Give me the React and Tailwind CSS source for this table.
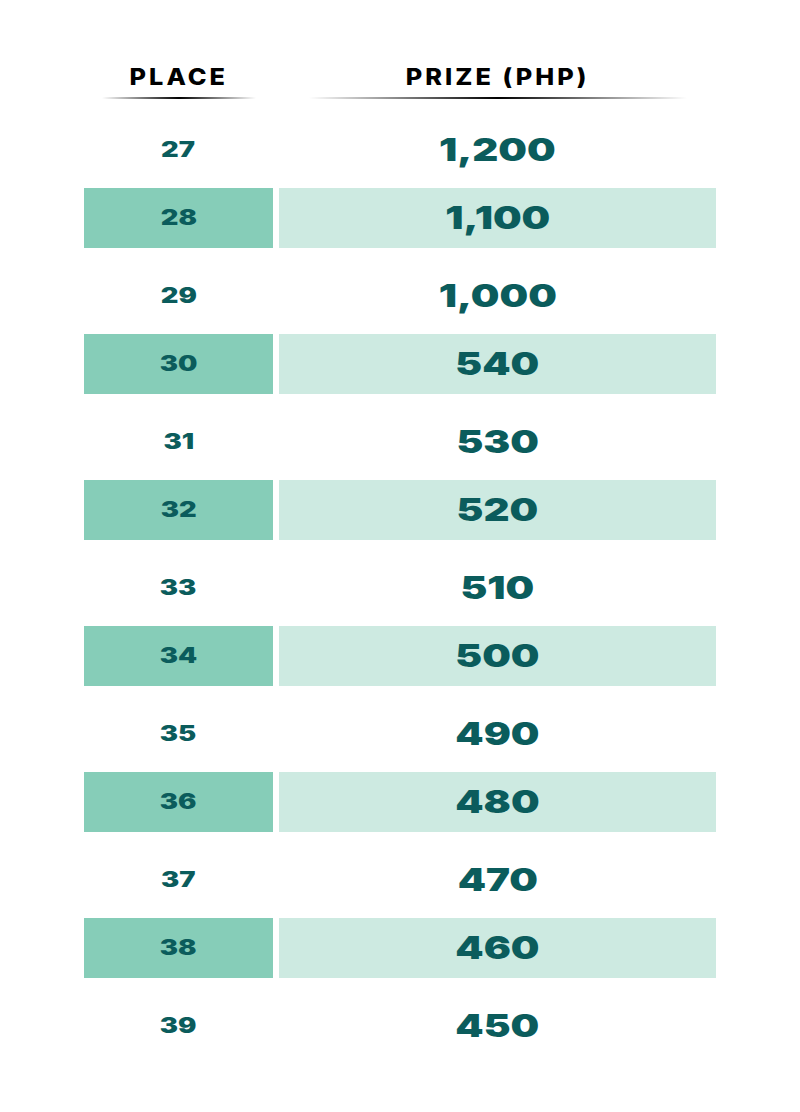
const rows = [
  ['27', '1,200'],
  ['28', '1,100'],
  ['29', '1,000'],
  ['30', '540'],
  ['31', '530'],
  ['32', '520'],
  ['33', '510'],
  ['34', '500'],
  ['35', '490'],
  ['36', '480'],
  ['37', '470'],
  ['38', '460'],
  ['39', '450'],
];

export default function App() {
  return (
    <div className="w-[800px] h-[1112px] bg-white font-['Inter',sans-serif] text-[#0b5c5c]">
      <div className="w-[632px] mx-auto pt-[62px]">
        {/* Header */}
        <div className="grid grid-cols-[189px_437px] gap-x-[6px] h-[40px]">
          <div className="flex flex-col items-center">
            <span className="text-[23px] leading-[30px] font-extrabold tracking-[0.12em] text-black inline-block scale-x-[1.1]">PLACE</span>
            <div className="mt-[5px] w-[154px] h-[2px] bg-[linear-gradient(90deg,rgba(0,0,0,0),#000_50%,rgba(0,0,0,0))]" />
          </div>
          <div className="flex flex-col items-center">
            <span className="text-[23px] leading-[30px] font-extrabold tracking-[0.12em] text-black inline-block scale-x-[1.1]">PRIZE (PHP)</span>
            <div className="mt-[5px] w-[378px] h-[2px] bg-[linear-gradient(90deg,rgba(0,0,0,0),#000_50%,rgba(0,0,0,0))]" />
          </div>
        </div>

        {/* Rows */}
        <div>
          {rows.map(([place, prize], i) => {
            const striped = i % 2 === 1;
            return striped ? (
              <div key={place} className="grid grid-cols-[189px_437px] gap-x-[6px] h-[60px]">
                <div className="bg-[#86cdb8] flex items-center justify-center">
                  <span className="text-[21px] font-black inline-block scale-x-[1.3]">{place}</span>
                </div>
                <div className="bg-[#cdeae1] flex items-center justify-center">
                  <span className="text-[32px] font-black inline-block scale-x-[1.26]">{prize}</span>
                </div>
              </div>
            ) : (
              <div key={place} className="grid grid-cols-[189px_437px] gap-x-[6px] h-[86px] pt-[10px]">
                <div className="flex items-center justify-center">
                  <span className="text-[21px] font-black inline-block scale-x-[1.3]">{place}</span>
                </div>
                <div className="flex items-center justify-center">
                  <span className="text-[32px] font-black inline-block scale-x-[1.26]">{prize}</span>
                </div>
              </div>
            );
          })}
        </div>
      </div>
    </div>
  );
}
